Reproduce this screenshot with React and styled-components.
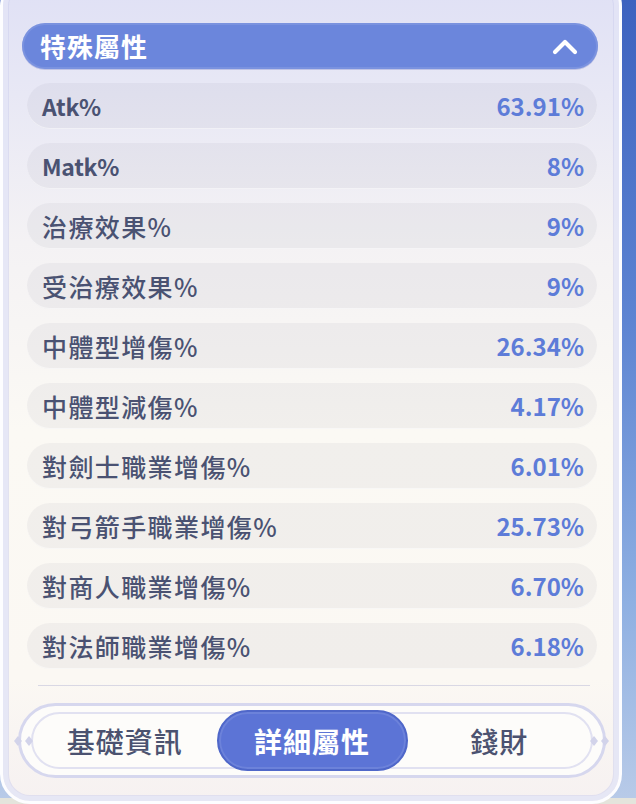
import React from "react";
import styled, { createGlobalStyle } from "styled-components";

const GlobalStyle = createGlobalStyle`
  html, body { margin: 0; padding: 0; }
  body {
    background: #e6e5dd;
    font-family: "Noto Sans CJK TC", "Noto Sans", sans-serif;
  }
`;

const Stage = styled.div`
  width: 636px;
  height: 804px;
  overflow: hidden;
  display: flex;
  align-items: flex-start;
  background:
    linear-gradient(180deg, transparent 0 798px, #e4e4dc 798px),
    linear-gradient(180deg, #3d62bf 0%, #5d84d2 40%, #8fb0e2 75%, #b9cbe8 100%);
`;

const Panel = styled.section`
  box-sizing: border-box;
  width: 622px;
  height: 828px;
  margin-top: -24px;
  flex-shrink: 0;
  border: 3px solid #fdfdff;
  border-radius: 30px;
  background: linear-gradient(180deg, #dfe0f5 0%, #e8e8f5 14%, #f4f2f4 32%, #fbf9f4 55%, #fbf8f3 85%, #f6f1f1 100%);
  box-shadow:
    inset 0 0 0 5px rgba(232, 233, 248, 0.7),
    inset 0 0 0 6px rgba(205, 207, 236, 0.55);
  padding: 44px 21px 21px 19px;
  display: flex;
  flex-direction: column;
`;

const Header = styled.div`
  height: 46px;
  flex-shrink: 0;
  box-sizing: border-box;
  border-radius: 23px;
  background: #6b86dc;
  box-shadow:
    inset 0 0 0 2px rgba(255, 255, 255, 0.1),
    0 1px 0 rgba(120, 130, 200, 0.35);
  display: flex;
  align-items: center;
  justify-content: space-between;
  padding: 0 20px 0 18px;
`;

const HeaderTitle = styled.span`
  color: #ffffff;
  font-size: 26px;
  font-weight: 700;
  letter-spacing: 1px;
  line-height: 1;
`;

const List = styled.div`
  display: flex;
  flex-direction: column;
  gap: 14px;
  margin: 14px 1px 0 5px;
`;

const Row = styled.div`
  height: 46px;
  box-sizing: border-box;
  border-radius: 23px;
  background: rgba(120, 122, 150, 0.075);
  box-shadow: inset 0 -1px 0 rgba(255, 255, 255, 0.5);
  display: flex;
  align-items: center;
  justify-content: space-between;
  padding: 0 13px 0 15px;
`;

const Label = styled.span`
  color: #4a5272;
  font-size: ${(p) => (p.$latin ? "23px" : "25px")};
  font-weight: ${(p) => (p.$latin ? 700 : 500)};
  letter-spacing: ${(p) => (p.$latin ? "-0.3px" : "1.4px")};
  line-height: 1;
`;

const Value = styled.span`
  color: #5d7cd8;
  font-size: 24px;
  font-weight: 700;
  line-height: 1;
`;

const Divider = styled.div`
  height: 1px;
  margin: 16px 8px 0 16px;
  background: rgba(190, 190, 215, 0.55);
`;

const TabBar = styled.nav`
  position: relative;
  margin: 17px -8px 0 -4px;
  height: 75px;
  box-sizing: border-box;
  border: 3px solid #d6d7ee;
  border-radius: 38px;
  background: #fdfcfa;
  padding: 4px 12px;
  display: grid;
  grid-template-columns: 1fr 191px 1fr;
  align-items: center;
  &::before {
    content: "";
    position: absolute;
    inset: 6px 10px;
    border: 2px solid #e1e1f1;
    border-radius: 30px;
    pointer-events: none;
  }
`;

const Tab = styled.div`
  position: relative;
  z-index: 1;
  height: 61px;
  box-sizing: border-box;
  display: flex;
  align-items: center;
  justify-content: center;
  font-size: 28px;
  line-height: 1;
  letter-spacing: 1px;
  color: ${(p) => (p.$active ? "#ffffff" : "#4b5270")};
  font-weight: ${(p) => (p.$active ? 700 : 500)};
  border-radius: 31px;
  background: ${(p) => (p.$active ? "#5c74d6" : "transparent")};
  border: ${(p) => (p.$active ? "2px solid #4f67c9" : "none")};
  box-shadow: ${(p) => (p.$active ? "inset 0 0 0 2px rgba(255,255,255,0.1)" : "none")};
`;

const Ornament = styled.svg`
  position: absolute;
  top: 50%;
  margin-top: -6px;
  ${(p) => (p.$side === "left" ? "left: -8px;" : "right: -8px;")}
`;

const rows = [
  ["Atk%", "63.91%", true],
  ["Matk%", "8%", true],
  ["治療效果%", "9%"],
  ["受治療效果%", "9%"],
  ["中體型增傷%", "26.34%"],
  ["中體型減傷%", "4.17%"],
  ["對劍士職業增傷%", "6.01%"],
  ["對弓箭手職業增傷%", "25.73%"],
  ["對商人職業增傷%", "6.70%"],
  ["對法師職業增傷%", "6.18%"],
];

const Diamonds = ({ side }) => (
  <Ornament $side={side} width="22" height="12" viewBox="0 0 22 12">
    <path d="M5 1 L9 6 L5 11 L1 6 Z" fill="#d2d3ea" />
    <path d="M16 1 L20 6 L16 11 L12 6 Z" fill="#d2d3ea" />
  </Ornament>
);

export default function App() {
  return (
    <>
      <GlobalStyle />
      <Stage>
        <Panel>
          <Header>
            <HeaderTitle>特殊屬性</HeaderTitle>
            <svg width="26" height="18" viewBox="0 0 26 18">
              <polyline
                points="3,15 13,5 23,15"
                fill="none"
                stroke="#ffffff"
                strokeWidth="4.2"
                strokeLinecap="round"
                strokeLinejoin="round"
              />
            </svg>
          </Header>
          <List>
            {rows.map(([label, value, latin]) => (
              <Row key={label}>
                <Label $latin={latin}>{label}</Label>
                <Value>{value}</Value>
              </Row>
            ))}
          </List>
          <Divider />
          <TabBar>
            <Diamonds side="left" />
            <Tab>基礎資訊</Tab>
            <Tab $active>詳細屬性</Tab>
            <Tab>錢財</Tab>
            <Diamonds side="right" />
          </TabBar>
        </Panel>
      </Stage>
    </>
  );
}
